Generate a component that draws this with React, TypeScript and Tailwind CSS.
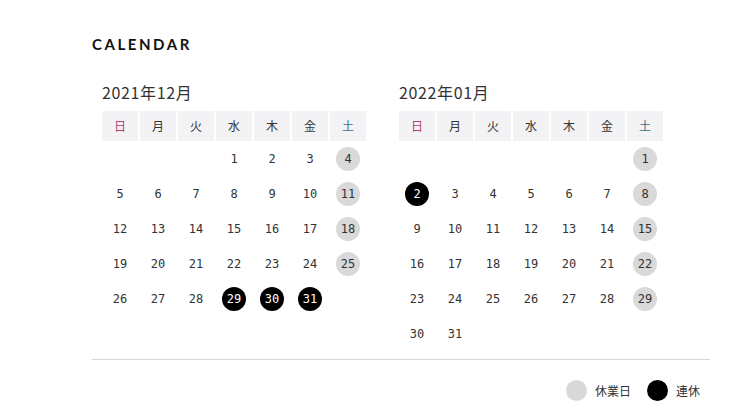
import React from "react";

type Mark = "off" | "long" | undefined;

type Month = {
  label: string;
  startDay: number; // 0 = 日
  days: number;
  marks: Record<number, Mark>;
};

const WEEK = ["日", "月", "火", "水", "木", "金", "土"];

const months: Month[] = [
  {
    label: "2021年12月",
    startDay: 3,
    days: 31,
    marks: { 4: "off", 11: "off", 18: "off", 25: "off", 29: "long", 30: "long", 31: "long" },
  },
  {
    label: "2022年01月",
    startDay: 6,
    days: 31,
    marks: { 1: "off", 8: "off", 15: "off", 22: "off", 29: "off", 2: "long" },
  },
];

function MonthTable({ month }: { month: Month }) {
  const cells: (number | null)[] = [];
  for (let i = 0; i < month.startDay; i++) cells.push(null);
  for (let d = 1; d <= month.days; d++) cells.push(d);

  return (
    <div className="w-[264px]">
      <div className="text-[16px] leading-[22px] text-[#333] tracking-[0.04em]">{month.label}</div>
      <div className="mt-[8px] grid grid-cols-7 gap-x-[2px]">
        {WEEK.map((w, i) => (
          <div
            key={w}
            className={
              "h-[30px] flex items-center justify-center bg-[#f3f3f5] text-[12px] " +
              (i === 0 ? "text-[#b2406c]" : i === 6 ? "text-[#3d6d8c]" : "text-[#333]")
            }
          >
            {w}
          </div>
        ))}
      </div>
      <div className="grid grid-cols-7 gap-x-[2px]">
        {cells.map((d, i) => {
          const mark = d ? month.marks[d] : undefined;
          return (
            <div key={i} className="h-[35px] flex items-center justify-center">
              {d && (
                <span
                  className={
                    "w-[24px] h-[24px] rounded-full flex items-center justify-center text-[12px] " +
                    (mark === "off"
                      ? "bg-[#d9d9d9] text-[#333]"
                      : mark === "long"
                      ? "bg-black text-white"
                      : "text-[#333]")
                  }
                  style={{ fontFamily: '"DejaVu Sans Mono", monospace' }}
                >
                  {d}
                </span>
              )}
            </div>
          );
        })}
      </div>
    </div>
  );
}

export default function App() {
  return (
    <div
      className="w-[750px] h-[420px] bg-white pl-[92px] pt-[33px] overflow-hidden"
      style={{ fontFamily: '"Noto Sans CJK JP", "Noto Sans", sans-serif' }}
    >
      <h2
        className="text-[15px] leading-[22px] font-bold tracking-[0.17em] text-[#111]"
        style={{ fontFamily: '"Lato", "Noto Sans", sans-serif' }}
      >
        CALENDAR
      </h2>
      <div className="mt-[26px] pl-[10px] flex gap-[33px]">
        {months.map((m) => (
          <MonthTable key={m.label} month={m} />
        ))}
      </div>
      <div className="mt-[8px] w-[618px] h-px bg-[#d6d6d6]" />
      <div className="w-[608px] mt-[20px] flex justify-end items-center gap-[8px] text-[12px] text-[#333]">
        <span className="w-[21px] h-[21px] rounded-full bg-[#d9d9d9]" />
        <span className="mr-[8px]">休業日</span>
        <span className="w-[21px] h-[21px] rounded-full bg-black" />
        <span>連休</span>
      </div>
    </div>
  );
}
